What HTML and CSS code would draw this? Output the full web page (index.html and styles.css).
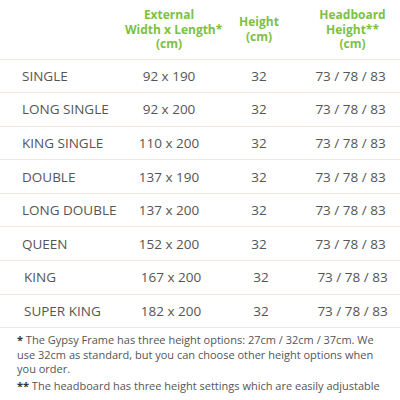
FILE: index.html
```html
<!DOCTYPE html>
<html lang="en">
<head>
    <meta charset="UTF-8">
    <title>Gypsy Frame Sizes</title>
    <link rel="stylesheet" href="styles.css">
</head>
<body>

    <table class="sizes">
        <colgroup>
            <col class="c-name">
            <col class="c-size">
            <col class="c-height">
            <col class="c-head">
        </colgroup>
        <thead>
            <tr>
                <th></th>
                <th>External<br>Width x Length*<br>(cm)</th>
                <th>Height<br>(cm)</th>
                <th>Headboard<br>Height**<br>(cm)</th>
            </tr>
        </thead>
        <tbody>
            <tr><td>SINGLE</td><td>92 x 190</td><td>32</td><td>73 / 78 / 83</td></tr>
            <tr><td>LONG SINGLE</td><td>92 x 200</td><td>32</td><td>73 / 78 / 83</td></tr>
            <tr><td>KING SINGLE</td><td>110 x 200</td><td>32</td><td>73 / 78 / 83</td></tr>
            <tr><td>DOUBLE</td><td>137 x 190</td><td>32</td><td>73 / 78 / 83</td></tr>
            <tr><td>LONG DOUBLE</td><td>137 x 200</td><td>32</td><td>73 / 78 / 83</td></tr>
            <tr><td>QUEEN</td><td>152 x 200</td><td>32</td><td>73 / 78 / 83</td></tr>
            <tr class="shift"><td>KING</td><td>167 x 200</td><td>32</td><td>73 / 78 / 83</td></tr>
            <tr class="shift"><td>SUPER KING</td><td>182 x 200</td><td>32</td><td>73 / 78 / 83</td></tr>
        </tbody>
    </table>

    <div class="notes">
        <p><b>*</b> The Gypsy Frame has three height options: 27cm / 32cm / 37cm. We use 32cm as standard, but you can choose other height options when you order.</p>
        <p><b>**</b> The headboard has three height settings which are easily adjustable</p>
    </div>

</body>
</html>
```

FILE: styles.css
```css
body {
    margin: 0;
    background: #fff;
    font-family: "Open Sans", Arial, sans-serif;
    color: #555;
}
.sizes {
    width: 100%;
    border-collapse: collapse;
    table-layout: fixed;
}
.c-name { width: 125px; }
.c-size { width: 88px; }
.c-height { width: 92px; }
.c-head { width: 95px; }
.sizes th {
    color: #7dc142;
    font-size: 12px;
    font-weight: bold;
    line-height: 14.5px;
    padding: 8px 0 7px;
    text-align: center;
    vertical-align: middle;
    white-space: nowrap;
}
.sizes td {
    height: 32.6px;
    padding: 0;
    font-size: 13.5px;
    text-align: center;
    border-top: 1.5px solid #f5e9df;
}
.sizes tbody tr:last-child td {
    border-bottom: 1.5px solid #f5e9df;
}
.sizes td:first-child {
    text-align: left;
    padding-left: 22px;
}
.sizes td:last-child {
    padding-right: 4px;
}
.sizes tr.shift td {
    padding-left: 4px;
}
.sizes tr.shift td:first-child {
    padding-left: 24px;
}
.notes {
    padding: 5px 12px 0 17px;
    font-size: 11px;
    line-height: 14.5px;
}
.notes p {
    margin: 0 0 2px;
}
.notes b {
    color: #333;
}
```
